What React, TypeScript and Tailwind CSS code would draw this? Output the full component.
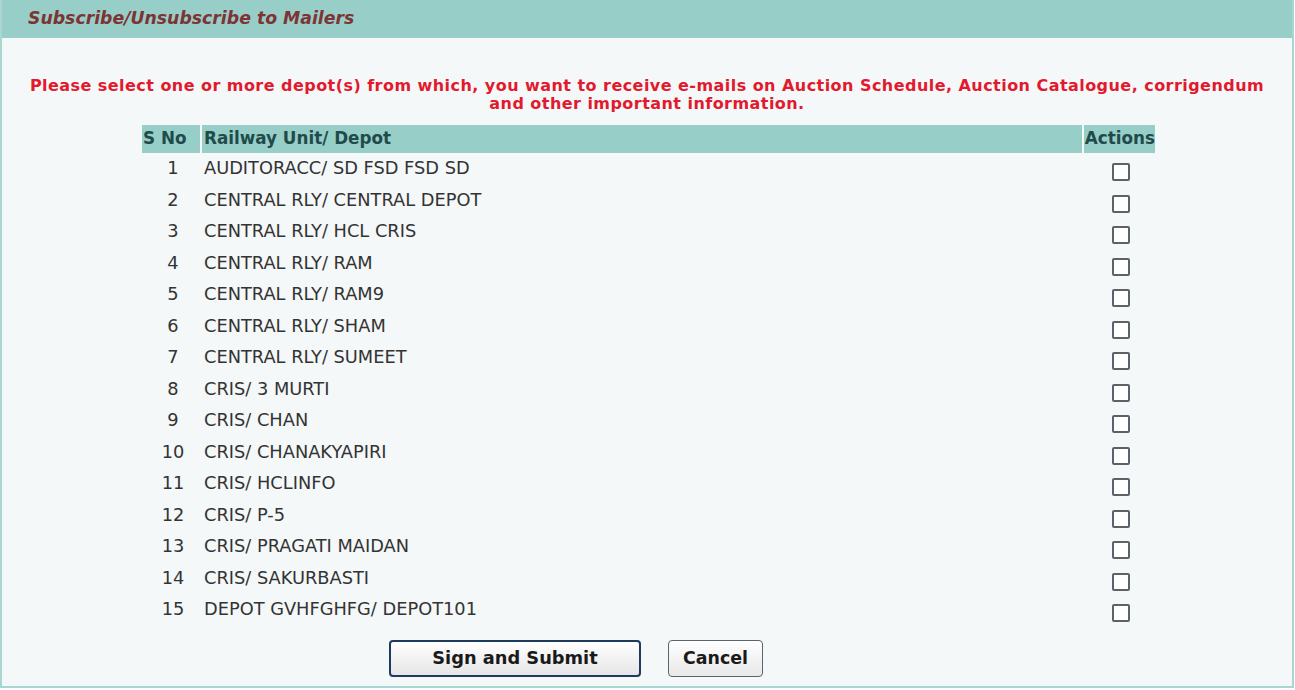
import React from 'react';

const depots = [
  'AUDITORACC/ SD FSD FSD SD',
  'CENTRAL RLY/ CENTRAL DEPOT',
  'CENTRAL RLY/ HCL CRIS',
  'CENTRAL RLY/ RAM',
  'CENTRAL RLY/ RAM9',
  'CENTRAL RLY/ SHAM',
  'CENTRAL RLY/ SUMEET',
  'CRIS/ 3 MURTI',
  'CRIS/ CHAN',
  'CRIS/ CHANAKYAPIRI',
  'CRIS/ HCLINFO',
  'CRIS/ P-5',
  'CRIS/ PRAGATI MAIDAN',
  'CRIS/ SAKURBASTI',
  'DEPOT GVHFGHFG/ DEPOT101',
];

export default function App() {
  return (
    <div className="w-[1295px] h-[690px] bg-white font-['DejaVu_Sans',Verdana,sans-serif]">
      <div className="w-[1294px] h-[688px] border-2 border-t-0 border-[#a9d6d1] bg-[#f4f8f8] flex flex-col">
        {/* Title bar */}
        <div className="h-[38px] bg-[#98cec8] flex items-center pl-[26px]">
          <span className="text-[17.3px] font-bold italic text-[#7d3434]">
            Subscribe/Unsubscribe to Mailers
          </span>
        </div>

        <p className="mt-[39px] px-[10px] text-center text-[16px] tracking-[0.45px] leading-[18px] font-bold text-[#e3192e] whitespace-nowrap">
          Please select one or more depot(s) from which, you want to receive e-mails on Auction Schedule, Auction Catalogue, corrigendum
          <br />
          and other important information.
        </p>

        <table className="ml-[138px] mt-[10px] w-[1017px] border-separate border-spacing-[2px]">
          <thead>
            <tr className="h-[28px] text-[16.8px] font-bold text-[#1f4b4b]">
              <th className="w-[58px] bg-[#98cec8] text-left pl-[1px]">S No</th>
              <th className="bg-[#98cec8] text-left pl-[2px]">Railway Unit/ Depot</th>
              <th className="w-[71px] bg-[#98cec8] text-left pl-[1px]">Actions</th>
            </tr>
          </thead>
          <tbody className="text-[17.8px] text-[#333333]">
            {depots.map((d, i) => (
              <tr key={i} className="h-[29.5px]">
                <td className="text-center pl-[4px] leading-[22px] pb-[3px]">{i + 1}</td>
                <td className="pl-[2px] leading-[22px] pb-[3px]">{d}</td>
                <td className="text-center pt-[3px] leading-[22px]">
                  <span className="inline-block w-[18px] h-[18px] ml-[3px] border-2 border-[#5a626c] rounded-[2px] bg-white align-middle" />
                </td>
              </tr>
            ))}
          </tbody>
        </table>

        <div className="mt-[12px] flex gap-[27px] pl-[387px]">
          <button className="w-[252px] h-[37px] rounded-[4px] border-2 border-[#1e3a5f] bg-gradient-to-b from-white to-[#e6e6e6] text-[17.8px] font-bold text-[#1a1a1a]">
            Sign and Submit
          </button>
          <button className="w-[95px] h-[37px] rounded-[4px] border border-[#5a6470] bg-gradient-to-b from-white to-[#e8e8e8] text-[17.4px] font-bold text-[#1a1a1a]">
            Cancel
          </button>
        </div>
      </div>
    </div>
  );
}
